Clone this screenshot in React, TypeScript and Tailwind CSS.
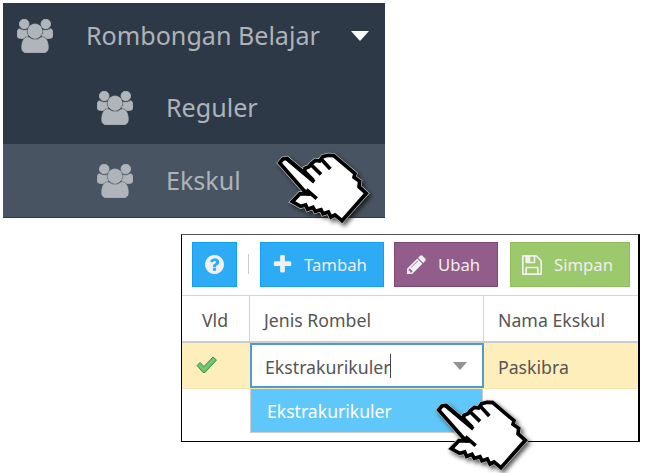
import type { ReactNode } from 'react'

const paths = {
  users:
    'M593 896q-162 5-265 128h-134q-82 0-138-40.5t-56-118.5q0-353 124-353 6 0 43.5 21t97.5 42.5 119 21.5q67 0 133-23-5 37-5 66 0 139 81 256zm1071 637q0 120-73 189.5t-194 69.5h-874q-121 0-194-69.5t-73-189.5q0-53 3.5-103.5t14-109 26.5-108.5 43-97.5 62-81 85.5-53.5 111.5-20q10 0 43 21.5t73 48 107 48 135 21.5 135-21.5 107-48 73-48 43-21.5q61 0 111.5 20t85.5 53.5 62 81 43 97.5 26.5 108.5 14 109 3.5 103.5zm-1024-1277q0 106-75 181t-181 75-181-75-75-181 75-181 181-75 181 75 75 181zm704 384q0 159-112.5 271.5t-271.5 112.5-271.5-112.5-112.5-271.5 112.5-271.5 271.5-112.5 271.5 112.5 112.5 271.5zm576 225q0 78-56 118.5t-138 40.5h-134q-103-123-265-128 81-117 81-256 0-29-5-66 66 23 133 23 59 0 119-21.5t97.5-42.5 43.5-21q124 0 124 353zm-128-609q0 106-75 181t-181 75-181-75-75-181 75-181 181-75 181 75 75 181z',
  question:
    'M1024 1376v-192q0-14-9-23t-23-9h-192q-14 0-23 9t-9 23v192q0 14 9 23t23 9h192q14 0 23-9t9-23zm256-672q0-88-55.5-163t-138.5-116-170-41q-243 0-371 213-15 24 8 42l132 100q7 6 19 6 16 0 25-12 53-68 86-92 34-24 86-24 48 0 85.5 26t37.5 59q0 38-20 61t-68 45q-63 28-115.5 86.5t-52.5 125.5v36q0 14 9 23t23 9h192q14 0 23-9t9-23q0-19 21.5-49.5t54.5-49.5q32-18 49-28.5t46-35 44.5-48 28-60.5 12.5-81zm384 192q0 209-103 385.5t-279.5 279.5-385.5 103-385.5-103-279.5-279.5-103-385.5 103-385.5 279.5-279.5 385.5-103 385.5 103 279.5 279.5 103 385.5z',
  plus: 'M1600 736v192q0 40-28 68t-68 28h-416v416q0 40-28 68t-68 28h-192q-40 0-68-28t-28-68v-416h-416q-40 0-68-28t-28-68v-192q0-40 28-68t68-28h416v-416q0-40 28-68t68-28h192q40 0 68 28t28 68v416h416q40 0 68 28t28 68z',
  pencil:
    'M491 1536l91-91-235-235-91 91v107h128v128h107zm523-928q0-22-22-22-10 0-17 7l-542 542q-7 7-7 17 0 22 22 22 10 0 17-7l542-542q7-7 7-17zm-54-192l416 416-832 832h-416v-416zm683 96q0 53-37 90l-166 166-416-416 166-165q36-38 90-38 53 0 91 38l235 234q37 39 37 91z',
  save: 'M512 1536h768v-384h-768v384zm896 0h128v-896q0-14-10-38.5t-20-34.5l-281-281q-10-10-34-20t-39-10v416q0 40-28 68t-68 28h-576q-40 0-68-28t-28-68v-416h-128v1280h128v-416q0-40 28-68t68-28h832q40 0 68 28t28 68v416zm-384-928v-320q0-13-9.5-22.5t-22.5-9.5h-192q-13 0-22.5 9.5t-9.5 22.5v320q0 13 9.5 22.5t22.5 9.5h192q13 0 22.5-9.5t9.5-22.5zm640 32v928q0 40-28 68t-68 28h-1344q-40 0-68-28t-28-68v-1344q0-40 28-68t68-28h928q40 0 88 20t76 48l280 280q28 28 48 76t20 88z',
}

function UsersIcon() {
  return (
    <svg viewBox="0 0 1920 1792" className="w-9 h-[34px] shrink-0 fill-[#afb5ba] stroke-[#afb5ba]">
      <path d={paths.users} strokeWidth="45" />
    </svg>
  )
}

function ButtonIcon({ d, className }: { d: string; className: string }) {
  return (
    <svg viewBox="128 128 1536 1536" className={`shrink-0 fill-[#f0f0f0] ${className}`}>
      <path d={d} />
    </svg>
  )
}

const handShape =
  'M44 54 L54 42 L66 40 L118 84 L120 70 L132 65 L138 57 L151 46 L164 48 L173 35 L190 31 L206 32 L270 86 L267 97 L284 109 L282 125 L304 145 L231 227 L220 218 L210 210 L198 216 L190 201 L174 206 L168 194 L151 199 L144 187 L128 193 L122 180 L107 184 L82 170 L105 146 L126 147 Z'

function HandCursor({ className }: { className: string }) {
  return (
    <svg viewBox="0 0 360 270" className={`absolute w-[120px] h-[90px] overflow-visible ${className}`}>
      <path d={handShape} transform="translate(7 8)" className="fill-black/60 stroke-black/50 blur-[6px]" strokeWidth="16" />
      <path d={handShape} className="fill-white stroke-[#c8c8c8]" strokeWidth="15" />
      <path d={handShape} className="fill-white stroke-black" strokeWidth="11" />
      <path
        d="M66 42 L148 111 M119 80 L145 106 M139 60 L168 88 M169 43 L196 72 M116 137 L130 149 M124 134 L155 161"
        className="fill-none stroke-black"
        strokeWidth="11"
      />
    </svg>
  )
}

function MenuItem({ label, className, children }: { label: string; className: string; children?: ReactNode }) {
  return (
    <div className={`flex items-center ${className}`}>
      <UsersIcon />
      <span className="ml-[33px] pb-[2px] text-[25.1px] leading-9 whitespace-nowrap text-[#adb3b8]">{label}</span>
      {children}
    </div>
  )
}

export default function App() {
  return (
    <div className="relative w-[670px] h-[473px] overflow-hidden bg-white font-['Noto_Sans','Open_Sans',sans-serif]">
      <nav className="w-[385px] h-[218px] pl-[3px] pt-[3px]">
        <MenuItem label="Rombongan Belajar" className="h-[69px] pl-[14px] pb-[3px] bg-[#2d3946]">
          <svg viewBox="0 0 18 10" className="w-[18px] h-[10px] ml-auto mr-[16px] fill-white">
            <path d="M0 0h18l-9 10z" />
          </svg>
        </MenuItem>
        <MenuItem label="Reguler" className="h-[72px] pl-[94px] bg-[#2d3946]" />
        <MenuItem label="Ekskul" className="h-[74px] pl-[94px] bg-[#485461] border-b border-[#2d3946]" />
      </nav>

      <main className="mt-4 ml-[181px] w-[459px] h-[208px] border border-black border-r-2 border-t-[#555] text-[17.7px] leading-6 text-[#555]">
        <div className="flex h-[60px] pt-[7px] pl-[10px] text-[16.7px] text-[#eee]">
          <button className="flex items-center justify-center w-[45px] h-[45px] bg-[#2eabf5] border border-[#159df0]">
            <ButtonIcon d={paths.question} className="size-[19px]" />
          </button>
          <span className="w-px h-5 mt-[12px] ml-[11px] mr-[11px] bg-[#ccc]" />
          <button className="flex items-center w-[124px] h-[45px] pl-[12px] bg-[#2eabf5] border border-[#159df0]">
            <ButtonIcon d={paths.plus} className="size-[19px]" />
            <span className="ml-[12px]">Tambah</span>
          </button>
          <button className="flex items-center w-[104px] h-[45px] ml-[10px] pl-[12px] bg-[#925d8a] border border-[#7c4875]">
            <ButtonIcon d={paths.pencil} className="size-[19px]" />
            <span className="ml-[12px]">Ubah</span>
          </button>
          <button className="flex items-center w-[120px] h-[45px] ml-[12px] pl-[11px] bg-[#9cc96b] border border-[#8ebd5b]">
            <ButtonIcon d={paths.save} className="size-[20px]" />
            <span className="ml-[12px]">Simpan</span>
          </button>
        </div>

        <div className="grid grid-cols-[68px_234px_1fr] h-[48px] border-t border-t-[#d5d5d5] border-b-2 border-b-[#ccc]">
          <div className="flex items-center pl-5 pt-[2px] border-r border-[#d5d5d5]">Vld</div>
          <div className="flex items-center pl-[14px] pt-[2px] border-r border-[#d5d5d5]">Jenis Rombel</div>
          <div className="flex items-center pl-[14px] pt-[2px]">Nama Ekskul</div>
        </div>

        <div className="grid grid-cols-[68px_234px_1fr] h-[46px] bg-[#feeebb] border-b border-[#f6e6b4]">
          <div className="pl-[14px] pt-[13px]">
            <svg viewBox="0 0 21 18" className="w-[21px] h-[18px]">
              <path d="M1 9.5 4 6.5l4 4L17 1l3.5 3L9 16.5H7z" className="fill-[#6bc06d] stroke-[#438f4b]" />
              <path d="M3 9.5l5 4L18 3" className="fill-none stroke-[#8bd18a]" />
            </svg>
          </div>
          <div className="flex items-center h-[45px] pl-[13px] pr-[15px] bg-white border-2 border-[#4c9bd5] text-[17.7px]">
            <span className="pt-[3px] whitespace-nowrap">Ekstrakurikuler</span>
            <span className="w-px h-6 bg-[#444]" />
            <svg viewBox="0 0 14 8" className="w-[14px] h-[8px] ml-auto fill-[#929292]">
              <path d="M0 0h14l-7 8z" />
            </svg>
          </div>
          <div className="flex items-center pl-[14px] pt-[3px]">Paskibra</div>
        </div>

        <div className="flex items-center w-[233px] h-[44px] ml-[68px] pl-4 bg-[#5fc7f9] border border-[#ccc] border-t-0 text-[17.6px] text-white">
          Ekstrakurikuler
        </div>
      </main>

      <HandCursor className="left-[265px] top-[145px]" />
      <HandCursor className="left-[424px] top-[392px]" />
    </div>
  )
}
